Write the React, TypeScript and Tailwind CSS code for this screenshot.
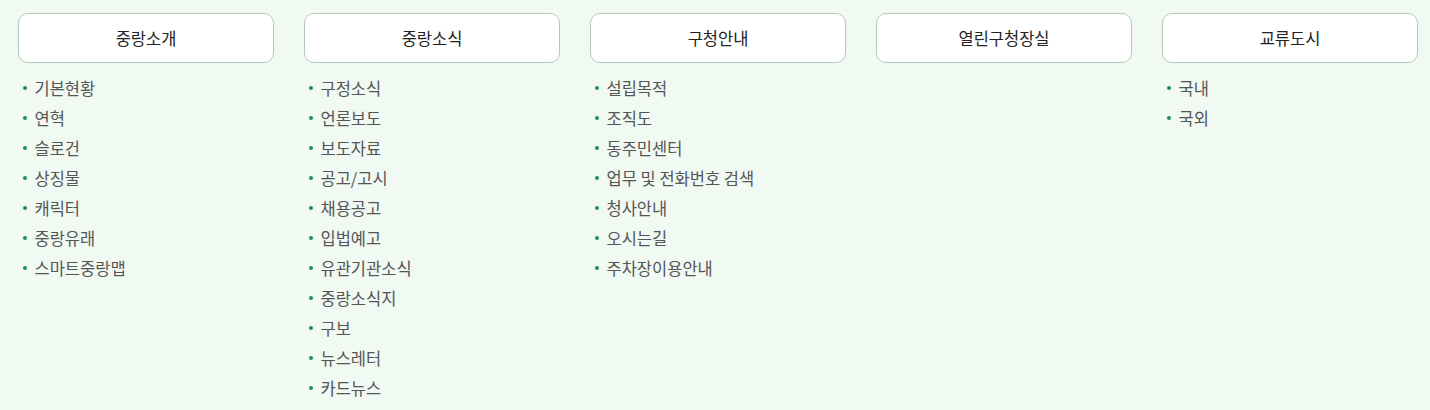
import React from "react";

const cols: { title: string; items: string[] }[] = [
  { title: "중랑소개", items: ["기본현황", "연혁", "슬로건", "상징물", "캐릭터", "중랑유래", "스마트중랑맵"] },
  { title: "중랑소식", items: ["구정소식", "언론보도", "보도자료", "공고/고시", "채용공고", "입법예고", "유관기관소식", "중랑소식지", "구보", "뉴스레터", "카드뉴스"] },
  { title: "구청안내", items: ["설립목적", "조직도", "동주민센터", "업무 및 전화번호 검색", "청사안내", "오시는길", "주차장이용안내"] },
  { title: "열린구청장실", items: [] },
  { title: "교류도시", items: ["국내", "국외"] },
];

export default function App() {
  return (
    <div
      className="w-[1430px] h-[410px] bg-[#f0f9f2] pl-[18px] pt-[13px] flex gap-[30px]"
      style={{ fontFamily: '"Noto Sans CJK KR", "Noto Sans", sans-serif' }}
    >
      {cols.map((c) => (
        <div key={c.title} className="w-[256px] flex flex-col">
          <div className="h-[50px] rounded-[10px] border border-[#b5c9b9] bg-white flex items-center justify-center text-[16.5px] font-normal text-[#222]">
            {c.title}
          </div>
          <ul className="mt-[10px] flex flex-col">
            {c.items.map((it) => (
              <li key={it} className="h-[30px] flex items-center text-[16.5px] text-[#555]">
                <span className="w-[3.5px] h-[3.5px] rounded-full bg-[#1f8c6c] ml-[5px] mr-[8px] shrink-0" />
                {it}
              </li>
            ))}
          </ul>
        </div>
      ))}
    </div>
  );
}
